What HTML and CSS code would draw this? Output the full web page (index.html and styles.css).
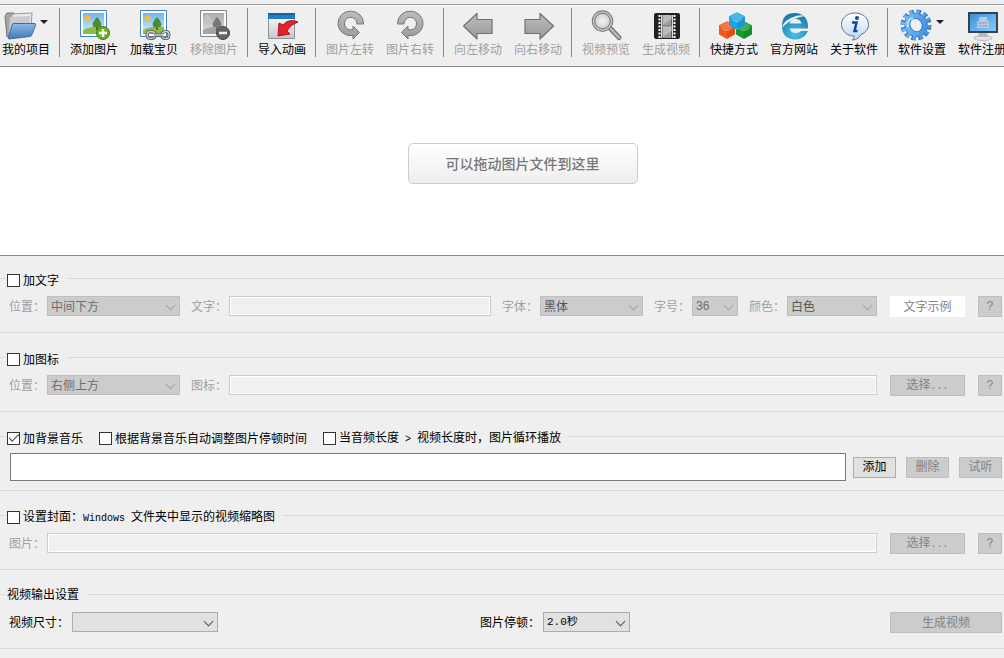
FILE: index.html
```html
<!DOCTYPE html>
<html lang="zh-CN">
<head>
<meta charset="utf-8">
<title>视频制作</title>
<link rel="stylesheet" href="styles.css">
</head>
<body>
<svg class="defs" aria-hidden="true">
  <defs>
    <linearGradient id="sky" x2="0" y2="1"><stop offset="0" stop-color="#6db4ee"/><stop offset="1" stop-color="#d8f0fd"/></linearGradient>
    <linearGradient id="greysky" x2="0" y2="1"><stop offset="0" stop-color="#a9a9a9"/><stop offset="1" stop-color="#e2e2e2"/></linearGradient>
    <linearGradient id="blue" x2="0" y2="1"><stop offset="0" stop-color="#8db8e6"/><stop offset="1" stop-color="#4179b8"/></linearGradient>
    <linearGradient id="silver" x2="0" y2="1"><stop offset="0" stop-color="#bdbdbd"/><stop offset="1" stop-color="#9a9a9a"/></linearGradient>
    <linearGradient id="sheet" x2="0" y2="1"><stop offset="0" stop-color="#ffffff"/><stop offset="1" stop-color="#c3c6c9"/></linearGradient>
    <linearGradient id="screen" x2="1" y2="1"><stop offset="0" stop-color="#3f8fdc"/><stop offset="1" stop-color="#86ccfb"/></linearGradient>
    <radialGradient id="globe" cy=".8" r=".9"><stop offset="0" stop-color="#46c3e8"/><stop offset="1" stop-color="#17699f"/></radialGradient>
    <radialGradient id="lens"><stop offset="0" stop-color="#f4f4f4"/><stop offset="1" stop-color="#c8c8c8"/></radialGradient>
    <linearGradient id="bubble" x2="0" y2="1"><stop offset="0" stop-color="#ffffff"/><stop offset="1" stop-color="#bcd8f6"/></linearGradient>
    <linearGradient id="gear" x2="1" y2="1"><stop offset="0" stop-color="#7cbcf6"/><stop offset="1" stop-color="#3f8fe6"/></linearGradient>
    <g id="photo">
      <path d="M2.5 1.500h26v26h-26z" fill="#fff" stroke="#3f86c4"/>
      <path d="M5 4h21v21H5z" fill="url(#sky)"/>
      <circle cx="9.500" cy="9" r="3" fill="#f9bd2e"/>
      <path d="M5 21q9-5 21-3v7H5z" fill="#8dbb45"/>
      <path d="M18 16h2v5h-2z" fill="#83562b"/>
      <path d="M19 8l2.500 3 2 4-1 3h-7l-1-3 2-4z" fill="#4b8b34"/>
    </g>
    <g id="photo-grey">
      <path d="M2.500 1.500h26v26h-26z" fill="#fafafa" stroke="#858585"/>
      <path d="M5 4h21v21H5z" fill="url(#greysky)"/>
      <circle cx="9.500" cy="9" r="3" fill="#c4c4c4"/>
      <path d="M5 21q9-5 21-3v7H5z" fill="#a4a4a4"/>
      <path d="M18 16h2v5h-2z" fill="#6a6a6a"/>
      <path d="M19 8l2.500 3 2 4-1 3h-7l-1-3 2-4z" fill="#777"/>
    </g>
    <path id="rotate" d="M29.500 15A12.800 12.300 0 1 0 19 26.500V30L25.500 23.500 19 17V20.500A6.300 6.300 0 1 1 23 15Z" fill="url(#silver)" stroke="#777" stroke-linejoin="round"/>
    <path id="arrow" d="M1.500 17L15 4.500V10.500H30V24.500H15V30Z" fill="url(#silver)" stroke="#717171" stroke-width="1.200" stroke-linejoin="round"/>
    <g id="cube">
      <path d="M0-7.500L7-4V4L0 8L-7 4V-4Z" stroke="currentColor" stroke-width="2" stroke-linejoin="round"/>
      <path d="M0-8L7.500-4 0 0-7.500-4Z" fill="#fff" opacity=".2"/>
      <path d="M0 0L7.500-4V4L0 8Z" fill="#000" opacity=".1"/>
      <path d="M-5-2q5 5 10 0" fill="none" stroke="#fff" opacity=".45"/>
    </g>
  </defs>
</svg>

<nav class="toolbar" aria-label="工具栏">
  <button class="tool tool-first">
    <span class="tool-icon"><svg viewBox="0 0 32 32"><path d="M1 7l2-3h7l2 2h14v6l-20 15-3 1z" fill="#a3a5a7" stroke="#747678"/><path d="M8 5l20-1-1 15-20 4z" fill="#e9eaeb" stroke="#96999b"/><path d="M6 8l20-1-1 14-20 3z" fill="#c9cbcd"/><path d="M8 16.500q0-2 2-2h21q1 0 .5 2l-4 10q0 1-2 1L5 30q-1 0-.5-2z" fill="url(#blue)" stroke="#386fa8"/></svg><i class="caret"></i></span>
    <span>我的项目</span>
  </button>
  <span class="separator"></span>
  <button class="tool">
    <span class="tool-icon"><svg viewBox="0 0 32 32"><use href="#photo"/><circle cx="25" cy="24" r="6.500" fill="#66b51b" stroke="#38830b"/><path d="M25 20v8M21 24h8" stroke="#fff" stroke-width="2.500"/></svg></span>
    <span>添加图片</span>
  </button>
  <button class="tool">
    <span class="tool-icon"><svg viewBox="0 0 32 32"><use href="#photo"/><g fill="none"><path id="chain" d="M17 24.500q-1-2-4-2-4 0-4 3.500t4 3.500q3 0 4-2M24 24.500q1-2 4-2 3 0 3 3.500t-3 3.500q-3 0-4-2M16 26h9" stroke="#555" stroke-width="3"/><path d="M17 24.500q-1-2-4-2-4 0-4 3.500t4 3.500q3 0 4-2M24 24.500q1-2 4-2 3 0 3 3.500t-3 3.500q-3 0-4-2M16 26h9" stroke="#d2d2d2" stroke-width="1.300"/></g></svg></span>
    <span>加载宝贝</span>
  </button>
  <button class="tool" disabled>
    <span class="tool-icon"><svg viewBox="0 0 32 32"><use href="#photo-grey"/><circle cx="25" cy="24" r="6.500" fill="#666" stroke="#444"/><path d="M21 24h8" stroke="#eee" stroke-width="2.500"/></svg></span>
    <span>移除图片</span>
  </button>
  <span class="separator"></span>
  <button class="tool">
    <span class="tool-icon"><svg viewBox="0 0 32 32"><path d="M2.500 4.500h26v25h-26z" fill="url(#sheet)" stroke="#8b9298"/><path d="M2 4h27v6H2z" fill="#1d80c5"/><path d="M2 4h27v2H2z" fill="#1764a2"/><path d="M32 13q-9-4-15 3l-4-2-1 13 12-2-3-3q3-6 11-9z" fill="#e6212e" stroke="#af1621" stroke-linejoin="round"/></svg></span>
    <span>导入动画</span>
  </button>
  <span class="separator"></span>
  <button class="tool" disabled>
    <span class="tool-icon"><svg viewBox="0 0 32 32"><use href="#rotate"/></svg></span>
    <span>图片左转</span>
  </button>
  <button class="tool" disabled>
    <span class="tool-icon"><svg viewBox="0 0 32 32"><use href="#rotate" transform="matrix(-1 0 0 1 33 0)"/></svg></span>
    <span>图片右转</span>
  </button>
  <span class="separator"></span>
  <button class="tool" disabled>
    <span class="tool-icon"><svg viewBox="0 0 32 32"><use href="#arrow"/></svg></span>
    <span>向左移动</span>
  </button>
  <button class="tool" disabled>
    <span class="tool-icon"><svg viewBox="0 0 32 32"><use href="#arrow" transform="matrix(-1 0 0 1 33 0)"/></svg></span>
    <span>向右移动</span>
  </button>
  <span class="separator"></span>
  <button class="tool" disabled>
    <span class="tool-icon"><svg viewBox="0 0 32 32"><path d="M19 18l10 10.500" stroke="#777" stroke-width="5" stroke-linecap="round"/><path d="M20 19l9 9.500" stroke="#bbb" stroke-width="2.500" stroke-linecap="round"/><circle cx="12.500" cy="12" r="9" fill="url(#lens)" stroke="#777" stroke-width="3.500"/><circle cx="12.500" cy="12" r="9" fill="none" stroke="#c5c5c5" stroke-width="1.500"/></svg></span>
    <span>视频预览</span>
  </button>
  <button class="tool" disabled>
    <span class="tool-icon"><svg viewBox="0 0 32 32"><rect x="4" y="4" width="26" height="26" rx="2" fill="#222"/><path d="M12.500 6h9v10.500h-9zM12.500 18h9v11h-9z" fill="#9b9b9b"/><path d="M12.500 6h9v4l-9 6zM12.500 18h9v4l-9 6z" fill="#bbb"/><path d="M9.500 6v23M24.500 6v23" stroke="#fff" stroke-width="2" stroke-dasharray="2 1.500"/><path d="M11.500 6v23M22.500 6v23M12 17.200h10" stroke="#ddd"/></svg></span>
    <span>生成视频</span>
  </button>
  <span class="separator"></span>
  <button class="tool">
    <span class="tool-icon"><svg viewBox="0 0 32 32"><use href="#cube" x="9" y="21" fill="#f4581b" color="#f4581b"/><use href="#cube" x="26" y="21" fill="#139c2d" color="#139c2d"/><use href="#cube" x="19" y="12" fill="#21a4e5" color="#21a4e5"/></svg></span>
    <span>快捷方式</span>
  </button>
  <button class="tool">
    <span class="tool-icon"><svg viewBox="0 0 32 32"><path d="M30 19.500H11.500Q13 24 18 24q3.500 0 5-2h7Q26 30.500 17.500 30.500 4 30 4 17 4 4 17 4 30.500 4.500 30 19.500zM11.500 14.500h12Q22.500 10 17.500 10 12.500 10 11.500 14.500z" fill="url(#globe)"/><path d="M4 19Q5 11 18 7q7-2 11 1-3-2-10 1Q10 12 4 19z" fill="#e8f7fd"/></svg></span>
    <span>官方网站</span>
  </button>
  <button class="tool">
    <span class="tool-icon"><svg viewBox="0 0 32 32"><path d="M17 4C9 4 3.500 9 3.500 15.500S9 27 16 27q1 3-2 4 6 0 9-5.500 7.500-3 7.500-10C30.500 9 25 4 17 4z" fill="url(#bubble)" stroke="#5c7795"/><circle cx="19" cy="9" r="2" fill="#174a96"/><path d="M14 13.500h4.500l-2 8.500h3" fill="none" stroke="#174a96" stroke-width="2.500"/></svg></span>
    <span>关于软件</span>
  </button>
  <span class="separator"></span>
  <button class="tool">
    <span class="tool-icon"><svg viewBox="0 0 32 32"><g transform="rotate(-30 16 16)" fill="none"><circle cx="16" cy="16" r="13" stroke="#286fb9" stroke-width="5" stroke-dasharray="4.300 2.507"/><ellipse cx="16" cy="16" rx="8.500" ry="9.500" stroke="#286fb9" stroke-width="6"/><circle cx="16" cy="16" r="12.500" stroke="url(#gear)" stroke-width="5" stroke-dasharray="3 3.545"/><ellipse cx="16" cy="16" rx="8.500" ry="9.500" stroke="url(#gear)" stroke-width="4.500"/><path d="M8 14q2-7 9-6" stroke="#b9ddff" stroke-width="2"/></g></svg><i class="caret"></i></span>
    <span>软件设置</span>
  </button>
  <button class="tool">
    <span class="tool-icon"><svg viewBox="0 0 32 32"><ellipse cx="17" cy="29" rx="9" ry="2.500" fill="#e2e4e6" stroke="#b6b9bc"/><path d="M13 23h8l1 5h-10z" fill="#b8bbbe"/><path d="M2 3h30v21H2z" fill="#38424d"/><path d="M4 5h26v17H4z" fill="url(#screen)"/><path d="M11 12h2V8h8v4h2v7H11z" fill="#c7d0da" opacity=".85"/><path d="M12 14h10M12 17h10" stroke="#8aa0b8"/></svg></span>
    <span>软件注册</span>
  </button>
</nav>

<main>
  <section class="drop-area">
    <button class="drop-target">可以拖动图片文件到这里</button>
  </section>

  <form class="settings">
    <fieldset class="group">
      <legend><label class="check"><input type="checkbox">加文字</label></legend>
      <div class="row">
        <div class="field muted"><label for="text-pos">位置：</label><span class="select position"><select id="text-pos" disabled><option>中间下方</option></select></span></div>
        <div class="field muted grow"><label for="text">文字：</label><input id="text" type="text" disabled></div>
        <div class="field muted"><label for="font">字体：</label><span class="select font"><select id="font" class="strong" disabled><option>黑体</option></select></span></div>
        <div class="field muted"><label for="size">字号：</label><span class="select size"><select id="size" class="number" disabled><option>36</option></select></span></div>
        <div class="field muted"><label for="color">颜色：</label><span class="select color"><select id="color" class="strong" disabled><option>白色</option></select></span></div>
        <div class="actions"><button type="button" class="btn wide sample" disabled>文字示例</button><button type="button" class="btn help" disabled>?</button></div>
      </div>
    </fieldset>

    <fieldset class="group">
      <legend><label class="check"><input type="checkbox">加图标</label></legend>
      <div class="row">
        <div class="field muted"><label for="icon-pos">位置：</label><span class="select position"><select id="icon-pos" disabled><option>右侧上方</option></select></span></div>
        <div class="field muted grow"><label for="icon">图标：</label><input id="icon" type="text" disabled></div>
        <div class="actions"><button type="button" class="btn wide" disabled>选择<span class="latin">...</span></button><button type="button" class="btn help" disabled>?</button></div>
      </div>
    </fieldset>

    <fieldset class="group music">
      <legend>
        <label class="check"><input type="checkbox" checked>加背景音乐</label>
        <label class="check"><input type="checkbox">根据背景音乐自动调整图片停顿时间</label>
        <label class="check"><input type="checkbox"><span>当音频长度<span class="latin"> &gt; </span>视频长度时，图片循环播放</span></label>
      </legend>
      <div class="row">
        <input class="music-list" type="text" aria-label="背景音乐">
        <div class="actions"><button type="button" class="btn small">添加</button><button type="button" class="btn small" disabled>删除</button><button type="button" class="btn small" disabled>试听</button></div>
      </div>
    </fieldset>

    <fieldset class="group">
      <legend><label class="check"><input type="checkbox"><span>设置封面：<span class="latin">Windows </span>文件夹中显示的视频缩略图</span></label></legend>
      <div class="row">
        <div class="field muted grow"><label for="cover">图片：</label><input id="cover" type="text" disabled></div>
        <div class="actions"><button type="button" class="btn wide" disabled>选择<span class="latin">...</span></button><button type="button" class="btn help" disabled>?</button></div>
      </div>
    </fieldset>

    <fieldset class="group output">
      <legend>视频输出设置</legend>
      <div class="row">
        <div class="field"><label for="video-size">视频尺寸：</label><span class="select video-size"><select id="video-size"><option></option></select></span></div>
        <div class="field"><label for="pause">图片停顿：</label><span class="select pause"><select id="pause" class="latin"><option>2.0秒</option></select></span></div>
        <button type="button" class="btn" disabled>生成视频</button>
      </div>
    </fieldset>
  </form>
</main>
</body>
</html>
```

FILE: styles.css
```css
* {
  box-sizing: border-box;
}

body {
  margin: 0;
  overflow: hidden;
  background: #efefef;
  color: #000;
  font: 12px/14px "Noto Sans CJK SC", sans-serif;
}

button,
input,
select {
  margin: 0;
  font: inherit;
  color: inherit;
}

.defs {
  position: absolute;
  width: 0;
  height: 0;
}

/* SimSun-like half-width characters */
.latin {
  font-family: "Liberation Mono", "Noto Sans CJK SC", monospace;
  font-size: 10px;
  line-height: 12px;
  white-space: pre;
}

/* Toolbar */
.toolbar {
  display: flex;
  align-items: flex-start;
  margin-top: 4px;
  padding: 3px 0 9px;
  overflow: hidden;
  border-top: 1px solid #999;
  border-bottom: 1px solid #888;
  box-shadow: inset 0 1px #fff;
}

.tool {
  display: flex;
  flex: none;
  flex-direction: column;
  align-items: center;
  gap: 1px;
  width: 60px;
  padding: 1px 0 0;
  border: 0;
  background: none;
  white-space: nowrap;
}

.tool-first {
  width: 56px;
  padding-right: 4px;
}

.tool:disabled {
  color: #a0a0a0;
}

.tool-icon {
  display: flex;
  gap: 4px;
}

.tool-icon svg {
  width: 32px;
  height: 32px;
  overflow: visible;
}

.caret {
  margin-top: 11px;
  align-self: flex-start;
  border: 4px solid transparent;
  border-top-color: #222;
  border-bottom: 0;
}

.separator {
  flex: none;
  width: 8px;
  height: 49px;
  background: linear-gradient(#888, #888) 3px 0 / 1px 100% no-repeat;
}

/* Drop area */
.drop-area {
  display: flex;
  justify-content: center;
  padding: 76px 0 71px 41px;
  border-bottom: 1px solid #888;
  background: #fff;
}

.drop-target {
  padding: 12px 37px 13px;
  border: 1px solid #ccc;
  border-radius: 5px;
  background: linear-gradient(#fff, #eee);
  color: #777;
  font-size: 14px;
  font-weight: 500;
}

/* Settings */
.settings {
  padding-top: 12px;
}

.group {
  min-width: 0;
  margin: 0 0 14px;
  padding: 0;
  border: solid #dadada;
  border-width: 1px 0;
}

.group legend {
  display: flex;
  gap: 16px;
  height: 20px;
  margin-left: 5px;
  padding: 5px 8px 1px 2px;
}

.output legend {
  padding-top: 3px;
}

.check {
  display: flex;
  align-items: center;
  gap: 3px;
}

.check input {
  display: grid;
  place-items: center;
  width: 13px;
  height: 13px;
  appearance: none;
  border: 1px solid #333;
  background: #fff;
}

.check input:checked::after {
  content: "";
  width: 9px;
  height: 4px;
  margin-bottom: 3px;
  border: solid #444;
  border-width: 0 0 1px 1px;
  transform: rotate(-45deg);
}

.row {
  display: flex;
  gap: 11px;
  padding: 8px 2px 15px 9px;
}

.field {
  display: flex;
  height: 20px;
}

.field label {
  flex: none;
  width: 63px;
  line-height: 20px;
}

.muted label {
  width: 38px;
  color: #a0a0a0;
}

.grow {
  flex: 1;
  min-width: 0;
}

.field input {
  flex: 1;
  min-width: 0;
  padding: 0 4px;
  border: 1px solid #ccc;
  background: #f0f0f0;
  box-shadow: inset 0 0 0 1px #fff;
}

.select {
  position: relative;
  display: flex;
}

.select::after {
  content: "";
  position: absolute;
  top: 6px;
  right: 6px;
  width: 6px;
  height: 6px;
  border: solid #555;
  border-width: 0 1px 1px 0;
  transform: rotate(45deg);
  pointer-events: none;
}

.muted .select::after {
  border-color: #a5a5a5;
}

.select select {
  width: 100%;
  padding: 0 3px;
  appearance: none;
  border: 1px solid #adadad;
  border-radius: 0;
  background: #e1e1e1;
  opacity: 1;
}

.select select.latin {
  font-family: "Liberation Mono", "Noto Sans CJK SC", monospace;
  font-size: 11px;
}

.select select.number {
  font-family: "Liberation Sans", sans-serif;
}

.select select:disabled {
  border-color: #bfbfbf;
  background: #ccc;
  color: #6d6d6d;
}

.select select.strong:disabled {
  color: #555;
}

.position { width: 133px; }
.font { width: 103px; }
.size { width: 46px; }
.color { width: 90px; }
.video-size { width: 146px; }
.pause { width: 87px; }

.actions {
  display: flex;
  gap: 13px;
  margin-left: 2px;
}

.btn {
  height: 21px;
  padding: 0 0 2px;
  border: 1px solid #adadad;
  background: #e1e1e1;
}

.btn:disabled {
  border-color: #bfbfbf;
  background: #ccc;
  color: #838383;
}

.btn.wide {
  width: 75px;
}

.btn.help {
  width: 24px;
  padding: 0;
  font-family: "Liberation Mono", monospace;
}

.btn.small {
  width: 43px;
}

.btn.sample:disabled {
  border-color: #fff;
  background: #fff;
}

.music .row {
  align-items: center;
  gap: 7px;
  padding: 7px 2px 9px 10px;
}

.music .actions {
  gap: 10px;
  margin-left: 0;
}

.music-list {
  flex: 1;
  min-width: 0;
  height: 28px;
  padding: 0 4px;
  border: 1px solid #7a7a7a;
  background: #fff;
}

.output .row {
  display: grid;
  grid-template-columns: 460px 1fr 112px;
}
```
